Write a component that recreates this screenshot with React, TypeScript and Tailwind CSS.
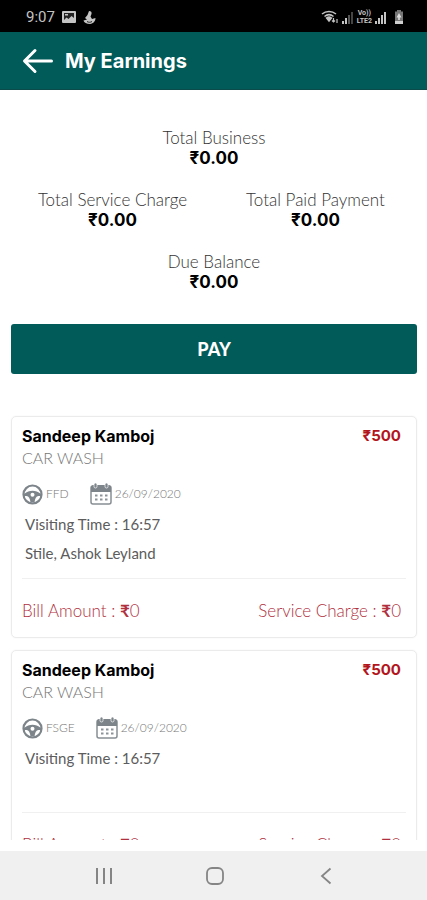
import type { ReactNode } from "react";

type Booking = {
  name: string;
  service: string;
  price: string;
  code: string;
  date: string;
  time: string;
  vehicle: string;
  bill: string;
  charge: string;
};

const bookings: Booking[] = [
  {
    name: "Sandeep Kamboj",
    service: "CAR WASH",
    price: "500",
    code: "FFD",
    date: "26/09/2020",
    time: "16:57",
    vehicle: "Stile, Ashok Leyland",
    bill: "0",
    charge: "0",
  },
  {
    name: "Sandeep Kamboj",
    service: "CAR WASH",
    price: "500",
    code: "FSGE",
    date: "26/09/2020",
    time: "16:57",
    vehicle: "",
    bill: "0",
    charge: "0",
  },
];

function Signal({ dim }: { dim: boolean }) {
  return (
    <svg width="12" height="13" viewBox="0 0 12 13" fill="#c4c4c4" aria-hidden="true">
      <rect x="0" y="10" width="2" height="3" />
      <rect x="3" y="7" width="2" height="6" />
      <rect x="6" y="4" width="2" height="9" fill={dim ? "#555" : "#c4c4c4"} />
      <rect x="9" y="1" width="2" height="12" fill={dim ? "#444" : "#c4c4c4"} />
    </svg>
  );
}

function StatusBar() {
  return (
    <div className="flex h-8 shrink-0 items-center justify-between bg-black pt-[2px] pr-[23px] pl-[26px] text-[#c4c4c4]">
      <div className="flex items-center gap-[7px]">
        <span className="font-['Roboto',sans-serif] text-[15px] leading-5">9:07</span>
        <svg width="14" height="12" viewBox="0 0 14 12" aria-hidden="true">
          <rect width="14" height="12" rx="1" fill="#c4c4c4" />
          <path d="M2 2h10v5L9.500 5 6.500 8 4.500 6.500 2 9Z" fill="#222" />
          <rect x="3" y="3" width="3" height="1.500" fill="#c4c4c4" />
        </svg>
        <svg width="13" height="13" viewBox="0 0 13 13" fill="#c4c4c4" aria-hidden="true">
          <path d="M6 0c2 0 3 1 2.500 3L7.500 5.500 9 8l3.500-1c0 3-2 5.500-5.500 6C3.500 13 1 11.500.5 9.500L4 8.500 2 7l2.500-3Z" />
          <path d="M4 10.500c1.500 1 3.500 1 5 0" stroke="#222" fill="none" />
        </svg>
      </div>
      <div className="flex items-center gap-[3px]">
        <svg width="18" height="14" viewBox="0 0 18 14" fill="none" stroke="#c4c4c4" strokeWidth="1.500" aria-hidden="true">
          <path d="M1 4c4-3.500 10-3.500 14 0M3.500 6.500c3-2.500 6-2.500 9 0" />
          <path d="M5.500 8c2-1.500 3-1.500 5 0L8 11Z" fill="#c4c4c4" />
          <path d="M12.500 8v4m-1.500-1.500 1.500 1.500 1.500-1.500M16 13V9" strokeWidth="1.200" />
        </svg>
        <Signal dim />
        <span className="flex flex-col items-center font-['Roboto',sans-serif] text-[7px] leading-[8px] font-bold">
          <span>Vo))</span>
          <span>LTE2</span>
        </span>
        <Signal dim={false} />
        <svg className="ml-1" width="10" height="14" viewBox="0 0 10 14" aria-hidden="true">
          <path d="M3 0h4v1.500h2V14H1V1.500h2Z" fill="#777" />
          <path d="M1 11h8v3H1Z" fill="#d0d0d0" />
          <path d="M5 3 2.500 7.500h1.700V10h1.600V7.500h1.700Z" fill="#ddd" />
        </svg>
      </div>
    </div>
  );
}

function Total({ label, children }: { label: string; children: ReactNode }) {
  return (
    <div className="flex flex-col items-center">
      <dt className="text-[17px] leading-5 font-light text-[#333]">{label}</dt>
      <dd className="font-['Inter',sans-serif] text-[17px] leading-5 font-bold text-black">{children}</dd>
    </div>
  );
}

function WheelIcon() {
  return (
    <svg width="21" height="21" viewBox="0 0 21 21" fill="none" stroke="#7d858b" aria-hidden="true">
      <circle cx="10.500" cy="10.500" r="9" strokeWidth="2.200" />
      <path
        fillRule="evenodd"
        d="M2 10C5 8 7.500 6.800 10.500 6.800S16 8 19 10v2h-2.500c-2.300.3-3.500 2.500-4 6.500h-4c-.5-4-1.700-6.200-4-6.500H2ZM10.500 8.800a2 2 0 1 0 0 4 2 2 0 0 0 0-4Z"
        fill="#7d858b"
        stroke="none"
      />
    </svg>
  );
}

function CalendarIcon() {
  return (
    <svg width="22" height="22" viewBox="0 0 22 22" aria-hidden="true">
      <rect x="1" y="3" width="20" height="18" rx="2" fill="#fff" stroke="#878e93" strokeWidth="1.500" />
      <path d="M1 9V4.500C1 3 2 2 3.500 2h15C20 2 21 3 21 4.500V9Z" fill="#7d858b" />
      <rect x="4" y="0" width="3" height="5" rx="1.500" fill="#7d858b" stroke="#fff" strokeWidth=".7" />
      <rect x="15" y="0" width="3" height="5" rx="1.500" fill="#7d858b" stroke="#fff" strokeWidth=".7" />
      <path d="M5 12.500h13M5 16.500h13" stroke="#8d9499" strokeWidth="2" strokeDasharray="2.500 2.500" />
    </svg>
  );
}

function BookingCard({ item }: { item: Booking }) {
  return (
    <li className="rounded-[5px] border border-[#ebebeb] px-[10px] pt-[9px] pb-4 shadow-[0_0_2px_rgba(0,0,0,0.06)]">
      <div className="flex items-center justify-between pr-[5px] font-['Inter',sans-serif] leading-5 font-bold">
        <h2 className="text-base leading-5 text-black">{item.name}</h2>
        <span className="text-[15px] leading-5 text-[#b3151c]">₹{item.price}</span>
      </div>
      <p className="text-base leading-6 font-light text-[#777]">{item.service}</p>
      <div className="mt-3 flex h-6 items-center text-[12px] font-light text-[#777]">
        <WheelIcon />
        <span className="mr-[21px] ml-[3px]">{item.code}</span>
        <CalendarIcon />
        <span className="ml-[3px]">{item.date}</span>
      </div>
      <div className="mt-1 pl-[3px] text-[15px] leading-[29px] text-[#5c5c5c]">
        <p>Visiting Time : {item.time}</p>
        <p className="min-h-[29px]">{item.vehicle}</p>
      </div>
      <div className="mt-[10px] flex justify-between border-t border-[#f0f0f0] pt-[22px] pr-[5px] text-[17px] leading-5 font-light text-[#b03040]">
        <span>
          Bill Amount : <span className="font-bold">₹</span>
          {item.bill}
        </span>
        <span>
          Service Charge : <span className="font-bold">₹</span>
          {item.charge}
        </span>
      </div>
    </li>
  );
}

export default function App() {
  return (
    <div className="flex h-screen flex-col bg-white font-['Lato','Noto_Sans',sans-serif]">
      <StatusBar />
      <header className="flex h-[58px] shrink-0 items-center gap-3 border-b border-[#0b4b49] bg-[#005b59] pl-[22px] text-white">
        <button type="button" aria-label="Back">
          <svg width="31" height="26" viewBox="0 0 31 26" fill="none" stroke="currentColor" strokeWidth="3" strokeLinecap="round" strokeLinejoin="round" aria-hidden="true">
            <path d="M29.500 13H3M13 2.500 2.500 13 13 23.500" />
          </svg>
        </button>
        <h1 className="font-['Inter',sans-serif] text-xl leading-6 font-bold">My Earnings</h1>
      </header>
      <main className="mb-[11px] min-h-0 flex-1 overflow-hidden pt-[38px] pr-[10px] pl-[11px]">
        <dl className="grid grid-cols-2 gap-y-[22px]">
          <div className="col-span-2">
            <Total label="Total Business">₹0.00</Total>
          </div>
          <Total label="Total Service Charge">₹0.00</Total>
          <Total label="Total Paid Payment">₹0.00</Total>
          <div className="col-span-2">
            <Total label="Due Balance">₹0.00</Total>
          </div>
        </dl>
        <button type="button" className="mt-8 h-[50px] w-full rounded-[3px] bg-[#005b59] text-lg font-black text-white">
          PAY
        </button>
        <ul className="mt-[42px] flex flex-col gap-3">
          {bookings.map((item) => (
            <BookingCard key={item.code} item={item} />
          ))}
        </ul>
      </main>
      <nav className="grid h-[49px] shrink-0 grid-cols-3 place-items-center bg-[#f0f0f0] pr-[46px] pl-[49px] text-[#858585]">
        <button type="button" aria-label="Recent apps">
          <svg width="18" height="18" viewBox="0 0 18 18" fill="none" stroke="currentColor" strokeWidth="2" aria-hidden="true">
            <path d="M2 1v16M9 1v16M16 1v16" />
          </svg>
        </button>
        <button type="button" aria-label="Home">
          <svg width="18" height="18" viewBox="0 0 18 18" fill="none" stroke="currentColor" strokeWidth="1.800" aria-hidden="true">
            <rect x="1" y="1" width="16" height="16" rx="5" />
          </svg>
        </button>
        <button type="button" aria-label="Back to previous screen">
          <svg width="12" height="18" viewBox="0 0 12 18" fill="none" stroke="currentColor" strokeWidth="1.800" aria-hidden="true">
            <path d="M10.500 1.500 2 9l8.500 7.500" />
          </svg>
        </button>
      </nav>
    </div>
  );
}
